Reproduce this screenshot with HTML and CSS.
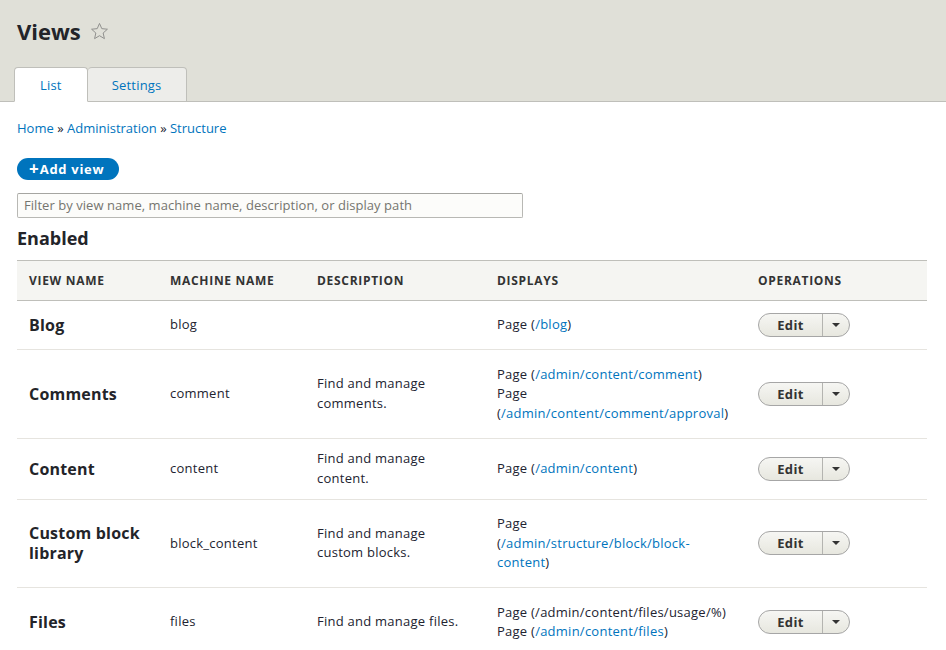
FILE: index.html
```html
<!DOCTYPE html>
<html lang="en">
<head>
<meta charset="utf-8">
<title>Views</title>
<link rel="stylesheet" href="styles.css">
</head>
<body>
<header class="page-header">
  <div class="title-row">
    <h1 class="page-title">Views</h1>
    <svg class="star" viewBox="0 0 24 24" width="19" height="19" aria-hidden="true">
      <polygon points="12,1.8 14.9,8.4 22,9.1 16.6,13.9 18.2,21 12,17.3 5.8,21 7.4,13.9 2,9.1 9.1,8.4" fill="none" stroke="#8c8c8a" stroke-width="1.2" stroke-linejoin="round"/>
    </svg>
  </div>
  <nav class="tabs">
    <a class="tab is-active" href="#">List</a>
    <a class="tab" href="#">Settings</a>
  </nav>
</header>
<main class="content">
  <nav class="breadcrumb"><a href="#">Home</a> » <a href="#">Administration</a> » <a href="#">Structure</a></nav>
  <div class="actions"><a class="button-add" href="#"><span class="plus">+</span>Add view</a></div>
  <input class="filter" type="search" placeholder="Filter by view name, machine name, description, or display path">
  <h2 class="section-title">Enabled</h2>
  <table class="views-table">
    <colgroup>
      <col class="c-name"><col class="c-machine"><col class="c-desc"><col class="c-disp"><col class="c-ops">
    </colgroup>
    <thead>
      <tr><th>View name</th><th>Machine name</th><th>Description</th><th>Displays</th><th>Operations</th></tr>
    </thead>
    <tbody>
      <tr>
        <td class="view-name">Blog</td>
        <td>blog</td>
        <td></td>
        <td><ul class="displays"><li>Page (<a href="#">/blog</a>)</li></ul></td>
        <td><div class="dropbutton"><a class="dropbutton-action" href="#">Edit</a><span class="dropbutton-toggle"><span class="arrow"></span></span></div></td>
      </tr>
      <tr>
        <td class="view-name">Comments</td>
        <td>comment</td>
        <td>Find and manage comments.</td>
        <td><ul class="displays"><li>Page (<a href="#">/admin/content/comment</a>)</li><li>Page<br>(<a href="#">/admin/content/comment/approval</a>)</li></ul></td>
        <td><div class="dropbutton"><a class="dropbutton-action" href="#">Edit</a><span class="dropbutton-toggle"><span class="arrow"></span></span></div></td>
      </tr>
      <tr>
        <td class="view-name">Content</td>
        <td>content</td>
        <td>Find and manage content.</td>
        <td><ul class="displays"><li>Page (<a href="#">/admin/content</a>)</li></ul></td>
        <td><div class="dropbutton"><a class="dropbutton-action" href="#">Edit</a><span class="dropbutton-toggle"><span class="arrow"></span></span></div></td>
      </tr>
      <tr>
        <td class="view-name">Custom block library</td>
        <td>block_content</td>
        <td>Find and manage custom blocks.</td>
        <td><ul class="displays"><li>Page<br>(<a href="#">/admin/structure/block/block-<br>content</a>)</li></ul></td>
        <td><div class="dropbutton"><a class="dropbutton-action" href="#">Edit</a><span class="dropbutton-toggle"><span class="arrow"></span></span></div></td>
      </tr>
      <tr>
        <td class="view-name">Files</td>
        <td>files</td>
        <td>Find and manage files.</td>
        <td><ul class="displays"><li>Page (/admin/content/files/usage/%)</li><li>Page (<a href="#">/admin/content/files</a>)</li></ul></td>
        <td><div class="dropbutton"><a class="dropbutton-action" href="#">Edit</a><span class="dropbutton-toggle"><span class="arrow"></span></span></div></td>
      </tr>
    </tbody>
  </table>
</main>
</body>
</html>
```
FILE: styles.css
```css
* { box-sizing: border-box; }
html, body { margin: 0; padding: 0; }
body {
  font-family: "Open Sans", "Noto Sans", "DejaVu Sans", sans-serif;
  font-size: 13px;
  line-height: 1.5;
  color: #222330;
  background: #fff;
}
a { color: #0074bd; text-decoration: none; }

.page-header {
  background: #e0e0d8;
  border-bottom: 1px solid #bfbfba;
  padding: 16px 0 0 14px;
}
.title-row {
  display: flex;
  align-items: center;
  gap: 9px;
  padding-left: 3px;
}
.page-title {
  margin: 0;
  font-size: 22px;
  line-height: 30px;
  font-weight: 700;
  color: #232429;
}
.star { display: block; margin-top: 1px; }

.tabs {
  display: flex;
  align-items: flex-end;
  margin-top: 21px;
  margin-bottom: -1px;
}
.tab {
  display: block;
  height: 35px;
  padding: 0 25px;
  line-height: 35px;
  font-size: 13px;
  letter-spacing: 0.2px;
  border: 1px solid #bfbfba;
  border-radius: 4px 4px 0 0;
  background: #ededea;
  color: #0074bd;
}
.tab + .tab { border-left: 0; padding: 0 24px; }
.tab.is-active {
  background: #fff;
  border-bottom-color: #fff;
}

.content {
  padding: 0 19px 40px 17px;
}
.breadcrumb {
  margin-top: 16px;
  line-height: 20px;
}
.actions { margin-top: 20px; }
.button-add {
  display: inline-flex;
  align-items: center;
  height: 22px;
  padding: 0 15px 0 12px;
  border-radius: 12px;
  background: #0074bd;
  color: #fff;
  font-weight: 700;
  font-size: 13px;
  letter-spacing: 0.7px;
  line-height: 22px;
}
.plus { font-size: 17px; margin-right: 1px; line-height: 20px; letter-spacing: 0; }
.filter {
  display: block;
  margin-top: 12px;
  width: 506px;
  height: 25px;
  padding: 0 6px;
  border: 1px solid #b8b8b4;
  border-top-color: #a5a5a1;
  border-radius: 2px;
  font-family: inherit;
  font-size: 13px;
  letter-spacing: 0.05px;
  color: #222330;
  background: #fcfcfa;
  outline: none;
}
.filter::placeholder { color: #75756f; }
.section-title {
  margin: 8px 0 0;
  font-size: 18px;
  line-height: 24px;
  font-weight: 700;
  color: #232429;
}

.views-table {
  width: 100%;
  margin-top: 10px;
  border-collapse: collapse;
  table-layout: fixed;
  letter-spacing: 0.25px;
}
.c-name { width: 141px; }
.c-machine { width: 147px; }
.c-desc { width: 180px; }
.c-disp { width: 261px; }
.c-ops { width: 181px; }
.views-table th {
  background: #f5f5f2;
  border-top: 1px solid #bfbfba;
  border-bottom: 1px solid #bfbfba;
  padding: 10px 12px 9px;
  height: 40px;
  text-align: left;
  text-transform: uppercase;
  font-size: 12px;
  letter-spacing: 0.7px;
  line-height: 19px;
  font-weight: 700;
  color: #333;
}
.views-table td {
  padding: 10.5px 12px;
  border-bottom: 1px solid #e6e4df;
  vertical-align: middle;
  line-height: 19.5px;
}
.views-table td.view-name {
  font-size: 16px;
  font-weight: 700;
  line-height: 20px;
  letter-spacing: 0.2px;
  color: #232429;
}
.displays {
  list-style: none;
  margin: 4px 0;
  padding: 0;
}

.dropbutton {
  display: flex;
  width: 92px;
  height: 24px;
  border: 1px solid #a6a6a6;
  border-radius: 12px;
  background: linear-gradient(#f6f6f3, #e7e7df);
  overflow: hidden;
  letter-spacing: 0.4px;
}
.dropbutton-action {
  flex: 0 0 64px;
  text-align: center;
  font-weight: 700;
  font-size: 13px;
  line-height: 22px;
  color: #333;
  border-right: 1px solid #b4b4b0;
}
.dropbutton-toggle {
  flex: 1;
  display: flex;
  align-items: center;
  justify-content: center;
}
.arrow {
  width: 0;
  height: 0;
  border-left: 4px solid transparent;
  border-right: 4px solid transparent;
  border-top: 4px solid #333;
  margin-left: -1px;
}
```
